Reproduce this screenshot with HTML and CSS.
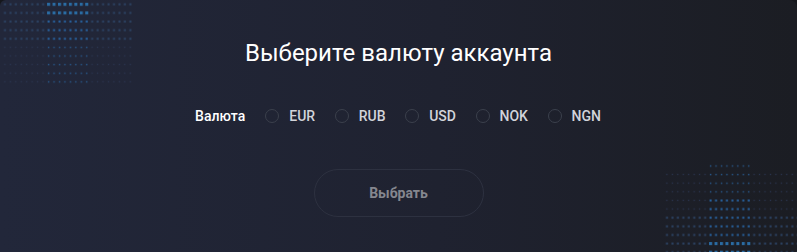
FILE: index.html
```html
<!DOCTYPE html>
<html lang="ru">
<head>
    <meta charset="UTF-8">
    <title>Валюта аккаунта</title>
    <link rel="stylesheet" href="styles.css">
</head>
<body>
<div class="modal">
    <svg class="dots dots-top" width="140" height="90" viewBox="0 0 140 90">
        <defs>
            <pattern id="tBig" x="3.5" y="2.8" width="5.45" height="8.62" patternUnits="userSpaceOnUse">
                <rect x="0" y="0" width="3" height="3" fill="#2a6ca4"/>
            </pattern>
            <pattern id="tMid" x="3.5" y="2.8" width="5.45" height="8.62" patternUnits="userSpaceOnUse">
                <rect x="0.5" y="0.5" width="2" height="2" fill="#2762a0"/>
            </pattern>
            <pattern id="tSmall" x="3.5" y="2.8" width="5.45" height="8.62" patternUnits="userSpaceOnUse">
                <rect x="0.8" y="0.8" width="1.4" height="1.4" fill="#26578a"/>
            </pattern>
            <pattern id="tDim" x="3.5" y="2.8" width="5.45" height="8.62" patternUnits="userSpaceOnUse">
                <rect x="0.5" y="0.5" width="2" height="2" fill="#2b4263"/>
            </pattern>
            <pattern id="tFaint" x="3.5" y="2.8" width="5.45" height="8.62" patternUnits="userSpaceOnUse">
                <rect x="0.8" y="0.8" width="1.2" height="1.2" fill="#2a3550"/>
            </pattern>
        </defs>
        <rect x="2" y="0" width="44" height="43" fill="url(#tDim)"/>
        <rect x="90" y="0" width="44" height="43" fill="url(#tDim)"/>
        <rect x="2" y="43" width="44" height="43" fill="url(#tFaint)"/>
        <rect x="90" y="43" width="44" height="43" fill="url(#tFaint)"/>
        <rect x="46" y="0" width="44" height="17" fill="url(#tBig)"/>
        <rect x="46" y="17" width="44" height="26" fill="url(#tMid)"/>
        <rect x="46" y="43" width="44" height="43" fill="url(#tSmall)"/>
    </svg>

    <svg class="dots dots-bottom" width="137" height="102" viewBox="660 150 137 102">
        <defs>
            <pattern id="bBig" x="665.5" y="164.5" width="5.45" height="8.62" patternUnits="userSpaceOnUse">
                <rect x="0" y="0" width="3" height="3" fill="#2a6ca4"/>
            </pattern>
            <pattern id="bMid" x="665.5" y="164.5" width="5.45" height="8.62" patternUnits="userSpaceOnUse">
                <rect x="0.5" y="0.5" width="2" height="2" fill="#2762a0"/>
            </pattern>
            <pattern id="bSmall" x="665.5" y="164.5" width="5.45" height="8.62" patternUnits="userSpaceOnUse">
                <rect x="0.8" y="0.8" width="1.4" height="1.4" fill="#26578a"/>
            </pattern>
            <pattern id="bDim" x="665.5" y="164.5" width="5.45" height="8.62" patternUnits="userSpaceOnUse">
                <rect x="0.5" y="0.5" width="2" height="2" fill="#2b4263"/>
            </pattern>
            <pattern id="bFaint" x="665.5" y="164.5" width="5.45" height="8.62" patternUnits="userSpaceOnUse">
                <rect x="0.8" y="0.8" width="1.2" height="1.2" fill="#2a3550"/>
            </pattern>
        </defs>
        <rect x="664" y="172" width="45" height="42" fill="url(#bFaint)"/>
        <rect x="752" y="172" width="45" height="42" fill="url(#bFaint)"/>
        <rect x="664" y="214" width="45" height="38" fill="url(#bDim)"/>
        <rect x="752" y="214" width="45" height="38" fill="url(#bDim)"/>
        <rect x="709" y="163" width="43" height="34" fill="url(#bSmall)"/>
        <rect x="709" y="197" width="43" height="43" fill="url(#bMid)"/>
        <rect x="709" y="240" width="43" height="12" fill="url(#bBig)"/>
    </svg>

    <h1 class="title">Выберите валюту аккаунта</h1>

    <div class="currency-row">
        <span class="currency-label">Валюта</span>
        <label class="option"><span class="radio"></span>EUR</label>
        <label class="option"><span class="radio"></span>RUB</label>
        <label class="option"><span class="radio"></span>USD</label>
        <label class="option"><span class="radio"></span>NOK</label>
        <label class="option"><span class="radio"></span>NGN</label>
    </div>

    <div class="actions">
        <button class="btn-select" type="button">Выбрать</button>
    </div>
</div>
</body>
</html>
```

FILE: styles.css
```css
html, body {
    margin: 0;
    padding: 0;
    background: #15171c;
}

.modal {
    position: relative;
    width: 797px;
    height: 252px;
    overflow: hidden;
    border-radius: 6px 8px 0 0;
    background: linear-gradient(90deg, #22273a 0%, #1f2230 55%, #1b1d23 100%);
    font-family: Roboto, "Liberation Sans", sans-serif;
    display: flex;
    flex-direction: column;
    align-items: center;
}

.dots {
    position: absolute;
    display: block;
}

.dots-top {
    left: 0;
    top: 0;
}

.dots-bottom {
    right: 0;
    bottom: 0;
}

.title {
    position: relative;
    margin: 38px 0 0;
    font-size: 24px;
    font-weight: 400;
    line-height: 30px;
    color: #ffffff;
}

.currency-row {
    position: relative;
    display: flex;
    align-items: center;
    margin-top: 38px;
    height: 20px;
    padding-right: 1px;
}

.currency-label {
    font-size: 14px;
    font-weight: 500;
    color: #ffffff;
    margin-right: 20px;
}

.option {
    display: flex;
    align-items: center;
    gap: 10px;
    margin-right: 19.6px;
    font-size: 14px;
    font-weight: 500;
    color: #d2d4da;
}

.option:last-child {
    margin-right: 0;
}

.radio {
    box-sizing: border-box;
    width: 14px;
    height: 14px;
    border-radius: 50%;
    border: 1px solid #3b404c;
}

.actions {
    position: relative;
    margin-top: 43px;
}

.btn-select {
    box-sizing: border-box;
    width: 170px;
    height: 48px;
    border-radius: 24px;
    border: 1px solid #2d3140;
    background: transparent;
    font-family: Roboto, "Liberation Sans", sans-serif;
    font-size: 14px;
    font-weight: 700;
    color: #85878f;
}
```
